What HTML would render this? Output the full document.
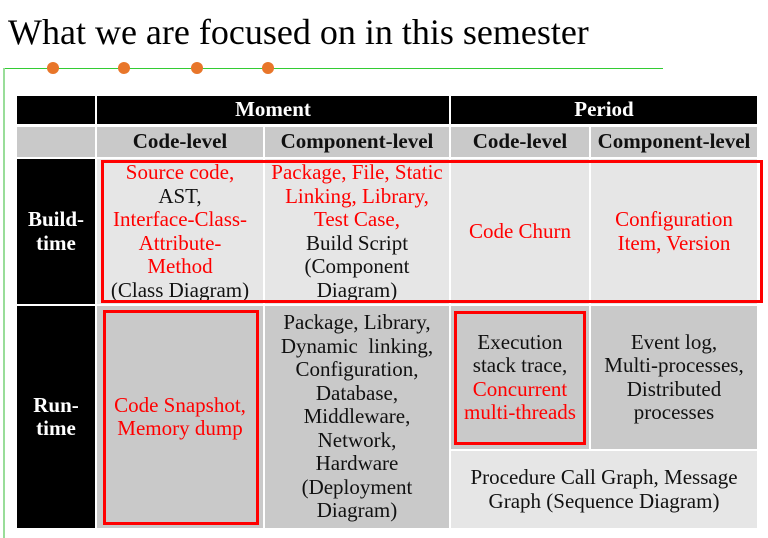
<!DOCTYPE html>
<html><head><style>
body{margin:0;width:768px;height:538px;background:#fff;position:relative;overflow:hidden;font-family:"Liberation Serif",serif;}
.a{position:absolute;}
.c{position:absolute;display:flex;align-items:center;justify-content:center;text-align:center;font-size:21px;line-height:23.5px;color:#111;box-sizing:border-box;white-space:nowrap;}
.h{background:#000;color:#fff;font-weight:bold;}
.g{background:#c9c9c9;}
.l{background:#e6e6e6;}
.b{font-weight:bold;}
.r{color:#f00;}
.box{position:absolute;border:3px solid #f00;box-sizing:border-box;}
.dot{position:absolute;width:12px;height:12px;border-radius:50%;background:#e8762a;top:62px;}
</style></head><body>
<div class="a" style="left:8px;top:12px;font-size:36px;line-height:40px;color:#000;white-space:nowrap;">What we are focused on in this semester</div>
<div class="a" style="left:3px;top:68px;width:660px;height:1px;background:#3c3;"></div>
<div class="a" style="left:3px;top:68px;width:2px;height:470px;background:#9d9;"></div>
<div class="dot" style="left:47px"></div><div class="dot" style="left:118px"></div><div class="dot" style="left:191px"></div><div class="dot" style="left:262px"></div>

<div class="c h" style="left:17px;top:96px;width:78px;height:28px;"></div>
<div class="c h" style="left:97px;top:96px;width:352px;height:28px;">Moment</div>
<div class="c h" style="left:451px;top:96px;width:306px;height:28px;">Period</div>

<div class="c g" style="left:17px;top:127px;width:78px;height:30px;"></div>
<div class="c g b" style="left:97px;top:127px;width:166px;height:30px;">Code-level</div>
<div class="c g b" style="left:265px;top:127px;width:184px;height:30px;">Component-level</div>
<div class="c g b" style="left:451px;top:127px;width:138px;height:30px;">Code-level</div>
<div class="c g b" style="left:591px;top:127px;width:166px;height:30px;">Component-level</div>

<div class="c h" style="left:17px;top:159px;width:78px;height:145px;">Build-<br>time</div>
<div class="c l" style="left:97px;top:159px;width:166px;height:145px;"><div><span class="r">Source code,</span><br>AST,<br><span class="r">Interface-Class-<br>Attribute-<br>Method</span><br>(Class Diagram)</div></div>
<div class="c l" style="left:265px;top:159px;width:184px;height:145px;"><div><span class="r">Package, File, Static<br>Linking, Library,<br>Test Case,</span><br>Build Script<br>(Component<br>Diagram)</div></div>
<div class="c l r" style="left:451px;top:159px;width:138px;height:145px;">Code Churn</div>
<div class="c l r" style="left:591px;top:159px;width:166px;height:145px;">Configuration<br>Item, Version</div>

<div class="c h" style="left:17px;top:306px;width:78px;height:222px;">Run-<br>time</div>
<div class="c g r" style="left:97px;top:306px;width:166px;height:222px;">Code Snapshot,<br>Memory dump</div>
<div class="c g" style="left:265px;top:306px;width:184px;height:222px;">Package, Library,<br>Dynamic&nbsp; linking,<br>Configuration,<br>Database,<br>Middleware,<br>Network,<br>Hardware<br>(Deployment<br>Diagram)</div>
<div class="c g" style="left:451px;top:306px;width:138px;height:143px;"><div>Execution<br>stack trace,<br><span class="r">Concurrent<br>multi-threads</span></div></div>
<div class="c g" style="left:591px;top:306px;width:166px;height:143px;">Event log,<br>Multi-processes,<br>Distributed<br>processes</div>
<div class="c l" style="left:451px;top:451px;width:306px;height:77px;">Procedure Call Graph, Message<br>Graph (Sequence Diagram)</div>

<div class="box" style="left:101px;top:160px;width:662px;height:143px;"></div>
<div class="box" style="left:103px;top:310px;width:156px;height:215px;"></div>
<div class="box" style="left:454px;top:311px;width:132px;height:134px;"></div>
</body></html>
